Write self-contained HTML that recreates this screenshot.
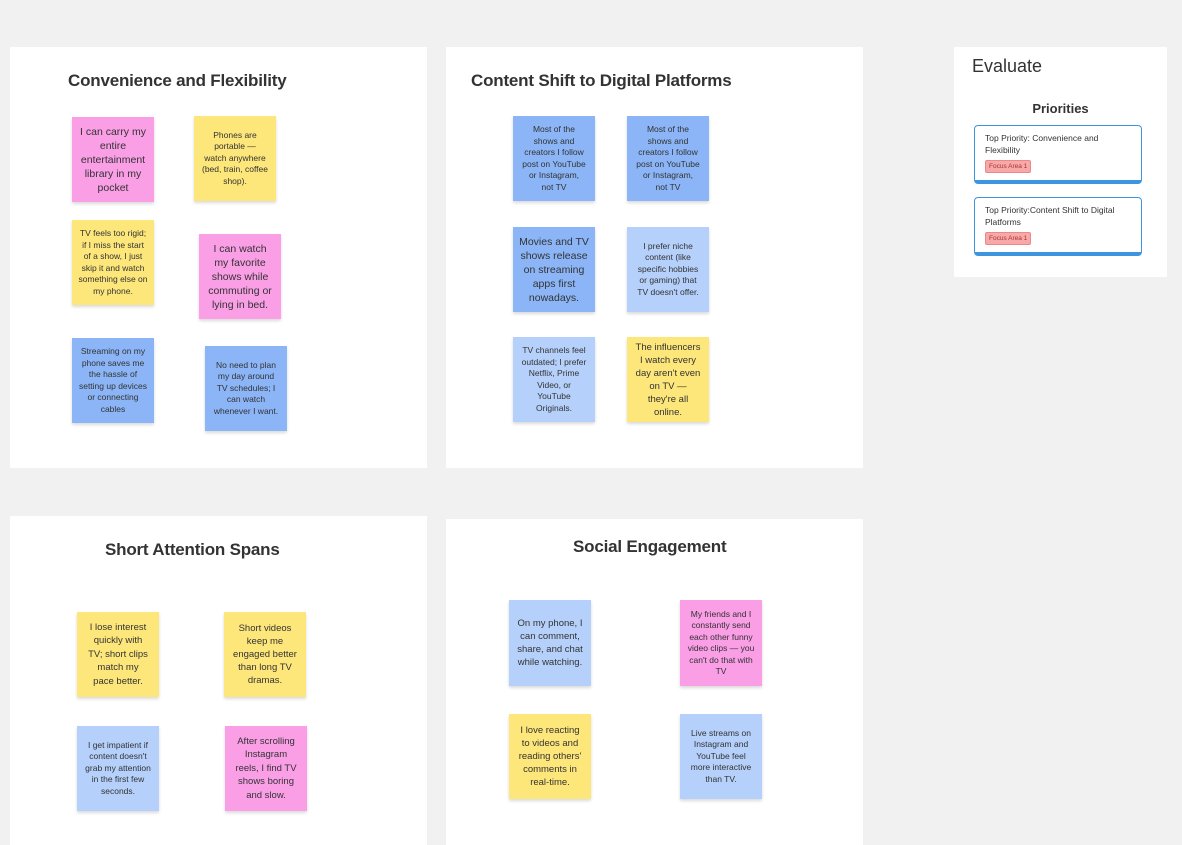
<!DOCTYPE html><html><head><style>
body{margin:0;width:1182px;height:845px;background:#f1f1f1;position:relative;overflow:hidden;font-family:"Liberation Sans","DejaVu Sans",sans-serif}
.f{position:absolute;background:#fff}
.t{position:absolute;font-weight:bold;font-size:17px;color:#333;white-space:nowrap;letter-spacing:-0.2px}
.s{position:absolute;width:82px;height:85px;display:flex;align-items:center;justify-content:center;text-align:center;box-sizing:border-box;padding:0 8px;font-size:8.5px;line-height:11.5px;color:#333;box-shadow:0 2px 3px rgba(0,0,0,.15)}
.b{font-size:10.5px;line-height:14px;padding:0 6px}
.p{background:#fa9ee6}.y{background:#fde77b}.bl{background:#8bb5f6}.lb{background:#b5d0fb}
.card{position:absolute;left:974px;width:168px;background:#fff;border:1.5px solid #3d95e0;border-bottom:4px solid #3d95e0;border-radius:4px;box-sizing:border-box;padding:6px 10px;font-size:8.5px;line-height:12px;color:#333}
.tag{display:inline-block;margin-top:4px;background:#f7a8a8;border:1px solid #e88;border-radius:2px;font-size:6.5px;color:#a33;padding:1px 3px;line-height:9px}
</style></head><body>
<div class="f" style="left:10px;top:47px;width:417px;height:421px"></div>
<div class="f" style="left:446px;top:47px;width:417px;height:421px"></div>
<div class="f" style="left:10px;top:516px;width:417px;height:329px"></div>
<div class="f" style="left:446px;top:519px;width:417px;height:326px"></div>
<div class="f" style="left:954px;top:47px;width:213px;height:230px"></div>
<div class="t" style="left:68px;top:71px">Convenience and Flexibility</div>
<div class="t" style="left:471px;top:71px">Content Shift to Digital Platforms</div>
<div class="t" style="left:105px;top:540px">Short Attention Spans</div>
<div class="t" style="left:573px;top:537px">Social Engagement</div>
<div style="position:absolute;left:972px;top:56px;font-size:18px;color:#333">Evaluate</div>
<div style="position:absolute;left:954px;top:101px;width:213px;text-align:center;font-weight:bold;font-size:13px;color:#333">Priorities</div>
<div class="card" style="top:125px;height:59px">Top Priority: Convenience and Flexibility<br><span class="tag">Focus Area 1</span></div>
<div class="card" style="top:197px;height:59px">Top Priority:Content Shift to Digital Platforms<br><span class="tag">Focus Area 1</span></div>

<div class="s p b" style="left:72px;top:117px">I can carry my entire entertainment library in my pocket</div>
<div class="s y" style="left:194px;top:116px">Phones are portable — watch anywhere (bed, train, coffee shop).</div>
<div class="s y" style="left:72px;top:220px;padding:0 6px">TV feels too rigid; if I miss the start of a show, I just skip it and watch something else on my phone.</div>
<div class="s p b" style="left:199px;top:234px;padding:0 8px">I can watch my favorite shows while commuting or lying in bed.</div>
<div class="s bl" style="left:72px;top:338px;padding:0 6px">Streaming on my phone saves me the hassle of setting up devices or connecting cables</div>
<div class="s bl" style="left:205px;top:346px">No need to plan my day around TV schedules; I can watch whenever I want.</div>

<div class="s bl" style="left:513px;top:116px;padding:0 9px">Most of the shows and creators I follow post on YouTube or Instagram, not TV</div>
<div class="s bl" style="left:627px;top:116px;padding:0 9px">Most of the shows and creators I follow post on YouTube or Instagram, not TV</div>
<div class="s bl b" style="left:513px;top:227px">Movies and TV shows release on streaming apps first nowadays.</div>
<div class="s lb" style="left:627px;top:227px">I prefer niche content (like specific hobbies or gaming) that TV doesn't offer.</div>
<div class="s lb" style="left:513px;top:337px">TV channels feel outdated; I prefer Netflix, Prime Video, or YouTube Originals.</div>
<div class="s y" style="left:627px;top:337px;font-size:9.5px;line-height:13px">The influencers I watch every day aren't even on TV — they're all online.</div>

<div class="s y" style="left:77px;top:612px;font-size:9.5px;line-height:13.5px;padding:0 9px">I lose interest quickly with TV; short clips match my pace better.</div>
<div class="s y" style="left:224px;top:612px;font-size:9.5px;line-height:13px">Short videos keep me engaged better than long TV dramas.</div>
<div class="s lb" style="left:77px;top:726px">I get impatient if content doesn't grab my attention in the first few seconds.</div>
<div class="s p" style="left:225px;top:726px;font-size:9.5px;line-height:13.5px">After scrolling Instagram reels, I find TV shows boring and slow.</div>

<div class="s lb" style="left:509px;top:600px;height:86px;font-size:9.5px;line-height:13px">On my phone, I can comment, share, and chat while watching.</div>
<div class="s p" style="left:680px;top:600px;height:86px;padding:0 6px">My friends and I constantly send each other funny video clips — you can't do that with TV</div>
<div class="s y" style="left:509px;top:714px;font-size:9.5px;line-height:13px">I love reacting to videos and reading others' comments in real-time.</div>
<div class="s lb" style="left:680px;top:714px">Live streams on Instagram and YouTube feel more interactive than TV.</div>
</body></html>
